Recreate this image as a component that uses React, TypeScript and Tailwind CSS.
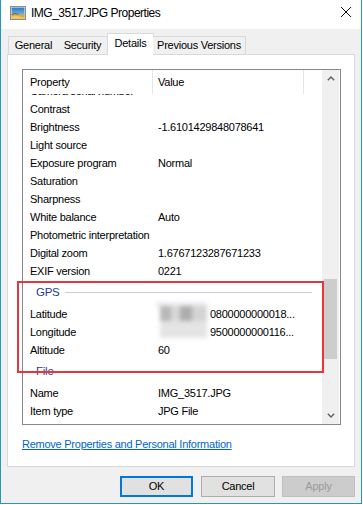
import React from "react";

const rows1: [string, string][] = [
  ["Contrast", ""],
  ["Brightness", "-1.6101429848078641"],
  ["Light source", ""],
  ["Exposure program", "Normal"],
  ["Saturation", ""],
  ["Sharpness", ""],
  ["White balance", "Auto"],
  ["Photometric interpretation", ""],
  ["Digital zoom", "1.6767123287671233"],
  ["EXIF version", "0221"],
];

function Row({ k, v, vpad }: { k: string; v: string; vpad?: boolean }) {
  return (
    <div className="h-[18px] flex items-center shrink-0 whitespace-nowrap">
      <div className="w-[130px] pl-[7px] shrink-0">{k}</div>
      <div className={vpad ? "pl-[57px]" : "pl-[5px]"}>{v}</div>
    </div>
  );
}

function Group({ name }: { name: string }) {
  return (
    <div className="h-[25px] flex items-center shrink-0 pl-[13px] pr-[10px]">
      <span className="text-[#1e3c8c] text-[11.5px]">{name}</span>
      <div className="flex-1 h-px bg-[#c8cedd] ml-[5px]" />
    </div>
  );
}

function Chevron({ up }: { up?: boolean }) {
  return (
    <svg width="8" height="5" viewBox="0 0 8 5">
      <polyline
        points={up ? "0.8,4.2 4,1 7.2,4.2" : "0.8,0.8 4,4 7.2,0.8"}
        fill="none"
        stroke="#606060"
        strokeWidth="1.4"
      />
    </svg>
  );
}

export default function App() {
  return (
    <div className="w-[363px] h-[505px] bg-white relative font-['Liberation_Sans',Arial,sans-serif] text-[11px] tracking-[-0.25px] text-black leading-none">
      <div className="w-[362px] h-[504px] border-x border-b border-[#2596be] flex flex-col bg-[#f0f0f0]">
        {/* title bar */}
        <div className="h-[29px] bg-white flex items-center pl-[9px] shrink-0">
          <svg width="16" height="14" viewBox="0 0 16 14" className="mt-[-3px]">
            <defs>
              <linearGradient id="sky" x1="0" y1="0" x2="0" y2="1">
                <stop offset="0" stopColor="#2a78c4" />
                <stop offset="1" stopColor="#9ad6f2" />
              </linearGradient>
            </defs>
            <rect x="0.5" y="0.5" width="15" height="13" fill="#ffffff" stroke="#8a8a8a" />
            <rect x="1.5" y="1.5" width="13" height="11" fill="url(#sky)" />
            <path d="M1.5 8.5 Q5 6.5 8.5 8.2 T14.5 7.5 V12.5 H1.5 Z" fill="#e9a52a" />
            <path d="M1.5 10.5 Q6 8.8 10 10.5 T14.5 10 V12.5 H1.5 Z" fill="#f3c65a" />
            <path d="M1.5 8.5 Q5 6.5 8.5 8.2" fill="none" stroke="#2d6a8e" strokeWidth="0.9" />
          </svg>
          <span className="ml-[5px] text-[12px] tracking-[-0.5px] mt-[-4px]">IMG_3517.JPG Properties</span>
          <div className="flex-1" />
          <svg width="12" height="12" viewBox="0 0 12 12" className="mr-[9px] mt-[-5px]">
            <path d="M1 1 L11 11 M11 1 L1 11" stroke="#111" strokeWidth="1" />
          </svg>
        </div>

        {/* body */}
        <div className="flex flex-col px-[6px]">
          {/* tabs */}
          <div className="mt-[4px] h-[21px] flex items-end pl-[1px] relative z-10">
            <div className="w-[51px] h-[18px] border-t border-l border-r border-[#d9d9d9] bg-[#f0f0f0] flex items-center justify-center">
              General
            </div>
            <div className="w-[50px] h-[18px] -ml-px border-t border-r border-[#d9d9d9] bg-[#f0f0f0] flex items-center justify-center">
              Security
            </div>
            <div className="w-[47px] h-[22px] -mb-px -ml-px border-t border-l border-r border-[#d9d9d9] bg-white flex items-center justify-center pb-[3px]">
              Details
            </div>
            <div className="w-[93px] h-[18px] -ml-px border-t border-r border-[#d9d9d9] bg-[#f0f0f0] flex items-center justify-center">
              Previous Versions
            </div>
          </div>

          {/* panel */}
          <div className="w-[348px] h-[413px] border border-[#d9d9d9] bg-white pl-[14px] pt-[14px] flex flex-col">
            <div className="w-[319px] h-[356px] border border-[#828790] flex shrink-0">
              <div className="w-[299px] flex flex-col">
                <div className="h-[24px] flex shrink-0 bg-white">
                  <div className="w-[130px] pl-[7px] border-r border-[#e5e5e5] flex items-center">Property</div>
                  <div className="w-[151px] pl-[5px] border-r border-[#e5e5e5] flex items-center">Value</div>
                </div>
                <div className="flex-1 overflow-hidden">
                  <div className="mt-[-12px] flex flex-col">
                    <Row k="Camera serial number" v="" />
                    {rows1.map(([k, v]) => (
                      <Row key={k} k={k} v={v} />
                    ))}
                    <Group name="GPS" />
                    <Row k="Latitude" v="0800000000018..." vpad />
                    <Row k="Longitude" v="9500000000116..." vpad />
                    <Row k="Altitude" v="60" />
                    <Group name="File" />
                    <Row k="Name" v="IMG_3517.JPG" />
                    <Row k="Item type" v="JPG File" />
                    <Row k="Folder path" v="C:\Users\Administrator\Desktop" />
                  </div>
                </div>
              </div>
              {/* scrollbar */}
              <div className="w-[17px] bg-[#f0f0f0] flex flex-col">
                <div className="h-[17px] flex items-center justify-center shrink-0">
                  <Chevron up />
                </div>
                <div className="flex-1 px-[2px]">
                  <div className="mt-[192px] h-[80px] bg-[#cdcdcd]" />
                </div>
                <div className="h-[17px] flex items-center justify-center shrink-0">
                  <Chevron />
                </div>
              </div>
            </div>
            <div className="mt-[14px]">
              <span className="text-[#0066cc] underline">Remove Properties and Personal Information</span>
            </div>
          </div>

          {/* buttons */}
          <div className="mt-[9px] flex justify-end">
            <button className="w-[73px] h-[21px] border-2 border-[#0078d7] bg-[#e1e1e1] flex items-center justify-center">
              OK
            </button>
            <button className="ml-[8px] w-[74px] h-[21px] border border-[#adadad] bg-[#e1e1e1] flex items-center justify-center">
              Cancel
            </button>
            <button className="ml-[7px] w-[73px] h-[21px] border border-[#bfbfbf] bg-[#cccccc] text-[#9a9a9a] flex items-center justify-center">
              Apply
            </button>
          </div>
        </div>
      </div>

      {/* blurred patch over GPS values */}
      <div className="absolute left-[155px] top-[301px] w-[55px] h-[40px] blur-[2px]">
        <div className="absolute left-[1px] top-[1px] w-[51px] h-[5px] bg-[#ededed]" />
        <div className="absolute left-[5px] top-[5px] w-[11px] h-[15px] bg-[#b8b8b8]" />
        <div className="absolute left-[16px] top-[5px] w-[9px] h-[15px] bg-[#d8d8d8]" />
        <div className="absolute left-[25px] top-[5px] w-[12px] h-[15px] bg-[#adadad]" />
        <div className="absolute left-[37px] top-[5px] w-[15px] h-[15px] bg-[#d4d4d4]" />
        <div className="absolute left-[5px] top-[20px] w-[47px] h-[17px] bg-[#e4e4e4]" />
      </div>

      {/* red annotation box */}
      <div className="absolute left-[17px] top-[281px] w-[307px] h-[92px] border-2 border-[#e3373d]" />
    </div>
  );
}
